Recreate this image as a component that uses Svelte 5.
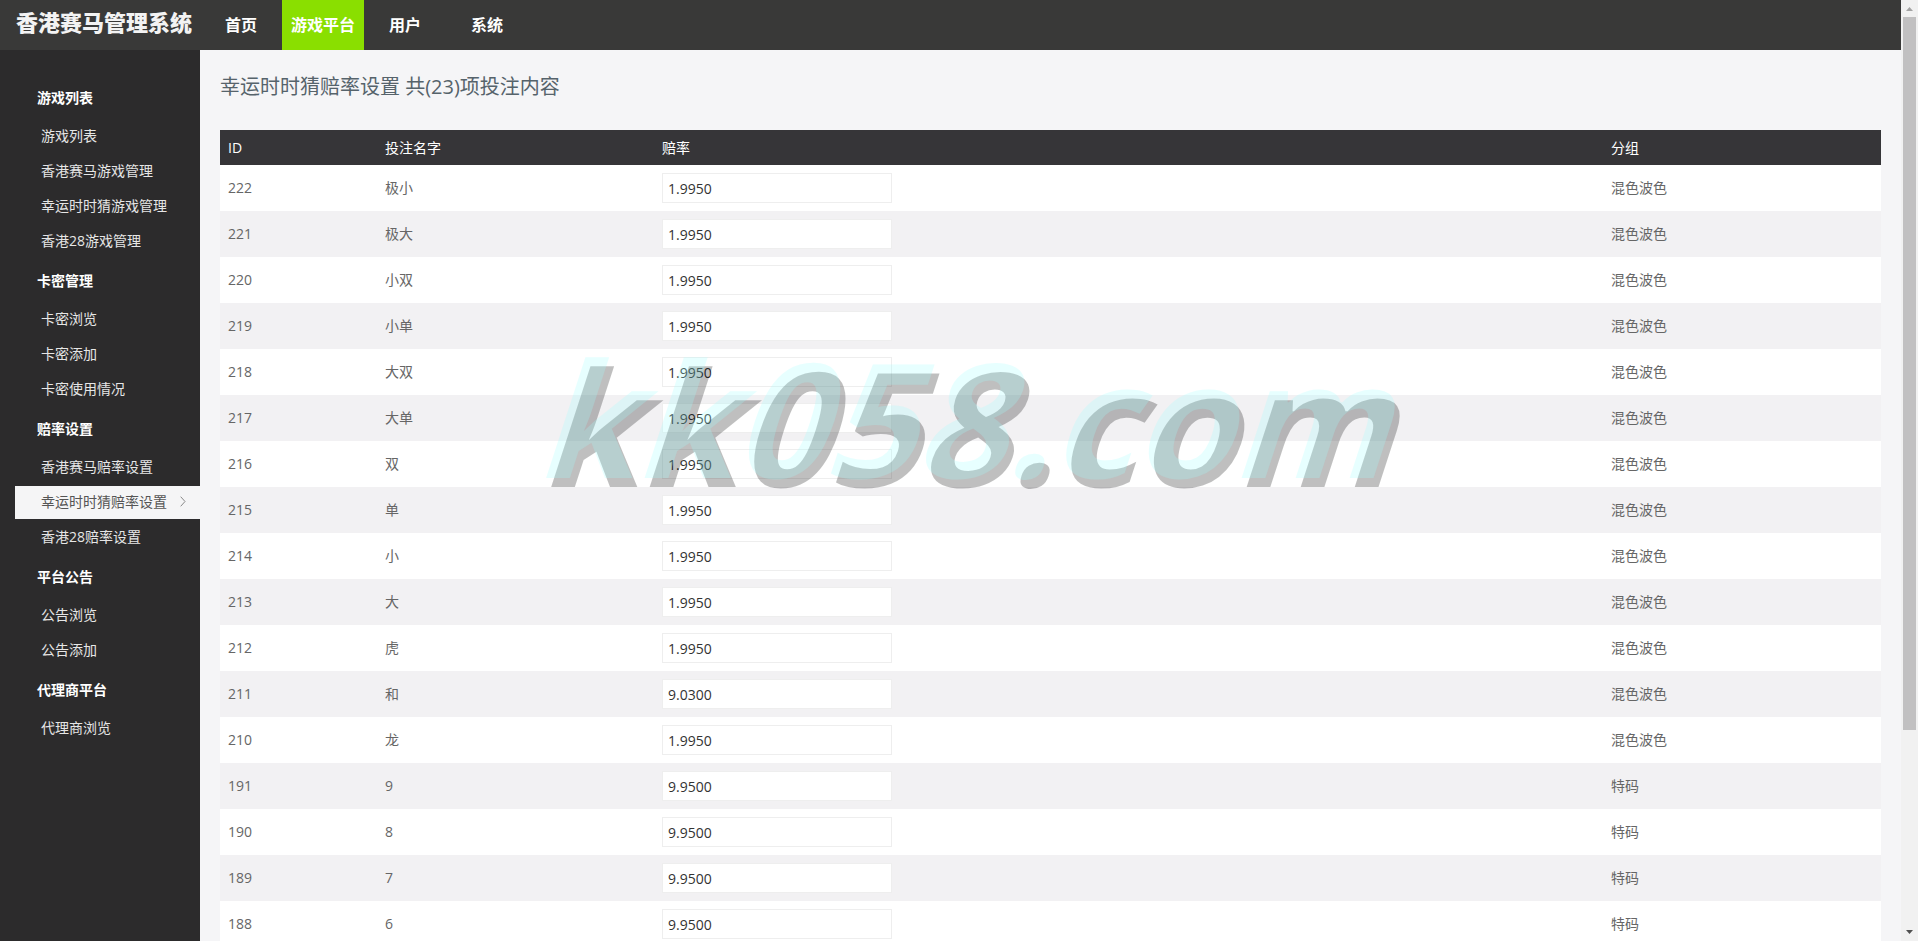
<script>
	const tabs = ["首页", "游戏平台", "用户", "系统"];
	let tab = "游戏平台";

	const menu = [
		{ title: "游戏列表", items: ["游戏列表", "香港赛马游戏管理", "幸运时时猜游戏管理", "香港28游戏管理"] },
		{ title: "卡密管理", items: ["卡密浏览", "卡密添加", "卡密使用情况"] },
		{ title: "赔率设置", items: ["香港赛马赔率设置", "幸运时时猜赔率设置", "香港28赔率设置"] },
		{ title: "平台公告", items: ["公告浏览", "公告添加"] },
		{ title: "代理商平台", items: ["代理商浏览"] }
	];
	let current = "幸运时时猜赔率设置";

	let rows = [
		{ id: 222, name: "极小", odds: "1.9950", group: "混色波色" },
		{ id: 221, name: "极大", odds: "1.9950", group: "混色波色" },
		{ id: 220, name: "小双", odds: "1.9950", group: "混色波色" },
		{ id: 219, name: "小单", odds: "1.9950", group: "混色波色" },
		{ id: 218, name: "大双", odds: "1.9950", group: "混色波色" },
		{ id: 217, name: "大单", odds: "1.9950", group: "混色波色" },
		{ id: 216, name: "双", odds: "1.9950", group: "混色波色" },
		{ id: 215, name: "单", odds: "1.9950", group: "混色波色" },
		{ id: 214, name: "小", odds: "1.9950", group: "混色波色" },
		{ id: 213, name: "大", odds: "1.9950", group: "混色波色" },
		{ id: 212, name: "虎", odds: "1.9950", group: "混色波色" },
		{ id: 211, name: "和", odds: "9.0300", group: "混色波色" },
		{ id: 210, name: "龙", odds: "1.9950", group: "混色波色" },
		{ id: 191, name: "9", odds: "9.9500", group: "特码" },
		{ id: 190, name: "8", odds: "9.9500", group: "特码" },
		{ id: 189, name: "7", odds: "9.9500", group: "特码" },
		{ id: 188, name: "6", odds: "9.9500", group: "特码" }
	];
</script>

<div class="window">
	<div class="page">
		<header>
			<a class="logo" href="#home">香港赛马管理系统</a>
			<nav>
				{#each tabs as name}
					<a href="#tab" class:active={tab === name} on:click|preventDefault={() => tab = name}>{name}</a>
				{/each}
			</nav>
		</header>

		<div class="body">
			<aside>
				{#each menu as section}
					<h2>{section.title}</h2>
					<ul>
						{#each section.items as item}
							<li>
								<a href="#item" class:active={current === item} on:click|preventDefault={() => current = item}>
									{item}
									{#if current === item}
										<svg width="6" height="11" viewBox="0 0 6 11"><path d="M0.7 0.7 L5 5.5 L0.7 10.3" /></svg>
									{/if}
								</a>
							</li>
						{/each}
					</ul>
				{/each}
			</aside>

			<main>
				<h1>幸运时时猜赔率设置 共(23)项投注内容</h1>
				<table>
					<thead>
						<tr>
							<th class="id">ID</th>
							<th class="name">投注名字</th>
							<th>赔率</th>
							<th class="group">分组</th>
						</tr>
					</thead>
					<tbody>
						{#each rows as row}
							<tr>
								<td>{row.id}</td>
								<td>{row.name}</td>
								<td><input type="text" aria-label={row.name} bind:value={row.odds}></td>
								<td>{row.group}</td>
							</tr>
						{/each}
					</tbody>
				</table>
			</main>
		</div>
	</div>

	<div class="scrollbar">
		<svg width="7" height="4" viewBox="0 0 7 4"><path fill="#a3a3a3" d="M3.5 0 L7 4 H0 Z" /></svg>
		<div class="track"><div class="thumb"></div></div>
		<svg width="7" height="4" viewBox="0 0 7 4"><path fill="#505050" d="M3.5 4 L7 0 H0 Z" /></svg>
	</div>

	<div class="watermark">kk058.com</div>
</div>

<style>
	:global(body) {
		margin: 0;
		background: #f5f5f7;
	}

	* {
		box-sizing: border-box;
	}

	.window {
		position: relative;
		display: flex;
		height: 100vh;
		overflow: hidden;
		font-family: "Open Sans", "Noto Sans CJK SC", sans-serif;
		font-size: 14px;
		color: #666;
	}

	.page {
		flex: 1;
		display: flex;
		flex-direction: column;
		min-width: 0;
	}

	a {
		color: inherit;
		text-decoration: none;
	}

	header {
		display: flex;
		flex: none;
		height: 50px;
		background: #393938;
		color: #fff;
	}

	.logo {
		width: 200px;
		padding-left: 16px;
		font-size: 22px;
		font-weight: 900;
		line-height: 44px;
		white-space: nowrap;
		color: #f3f3f3;
	}

	nav {
		display: flex;
	}

	nav a {
		width: 82px;
		font-size: 16px;
		font-weight: 700;
		line-height: 50px;
		text-align: center;
	}

	nav a.active {
		background: #8adf00;
	}

	.body {
		flex: 1;
		display: flex;
		min-height: 0;
	}

	aside {
		flex: none;
		width: 200px;
		padding: 26px 0 0 15px;
		background: #2c2b2c;
		color: #e6e6e6;
	}

	h2 {
		margin: 0;
		padding-left: 22px;
		font-size: 14px;
		font-weight: 700;
		line-height: 43px;
		color: #fff;
	}

	ul {
		margin: 0;
		padding: 0;
		list-style: none;
	}

	li {
		padding: 1px 0;
	}

	li a {
		display: flex;
		align-items: center;
		justify-content: space-between;
		height: 33px;
		padding: 0 14px 2px 26px;
		line-height: 30px;
		white-space: nowrap;
	}

	li a.active {
		background: #f5f5f6;
		color: #555;
	}

	li svg path {
		fill: none;
		stroke: #888;
	}

	main {
		flex: 1;
		min-width: 0;
		padding: 0 20px;
		background: #f5f5f7;
	}

	h1 {
		margin: 0;
		padding: 21px 0 27px;
		font-size: 20px;
		font-weight: 400;
		line-height: 32px;
		color: #56636b;
	}

	table {
		width: 100%;
		table-layout: fixed;
		border-collapse: collapse;
	}

	th {
		height: 35px;
		padding: 0 8px;
		background: #363538;
		color: #fff;
		font-weight: 400;
		line-height: 20px;
		text-align: left;
	}

	.id {
		width: 157px;
	}

	.name {
		width: 277px;
	}

	.group {
		width: 278px;
	}

	td {
		height: 46px;
		padding: 0 8px;
		line-height: 20px;
		background: #fff;
	}

	tbody tr:nth-child(even) td {
		background: #f2f1f3;
	}

	input {
		display: block;
		width: 230px;
		height: 30px;
		padding: 0 5px;
		border: 1px solid #eee;
		background: #fff;
		font-family: inherit;
		font-size: 14px;
		color: #333;
	}

	.scrollbar {
		flex: none;
		display: flex;
		flex-direction: column;
		align-items: center;
		gap: 6px;
		width: 17px;
		padding: 7px 0;
		background: #f1f1f1;
	}

	.scrollbar svg {
		flex: none;
	}

	.track {
		flex: 1;
		width: 13px;
	}

	.thumb {
		height: calc(100% * 11 / 14);
		background: #c1c0c1;
	}

	.watermark {
		position: absolute;
		top: 317px;
		left: 521px;
		font-family: "Open Sans", sans-serif;
		font-size: 159px;
		font-weight: 700;
		line-height: 200px;
		white-space: nowrap;
		color: rgba(160, 255, 255, 0.25);
		text-shadow: 8px 9px 0 rgba(0, 0, 0, 0.25);
		transform: skewX(-18deg);
		transform-origin: left bottom;
		pointer-events: none;
	}
</style>
